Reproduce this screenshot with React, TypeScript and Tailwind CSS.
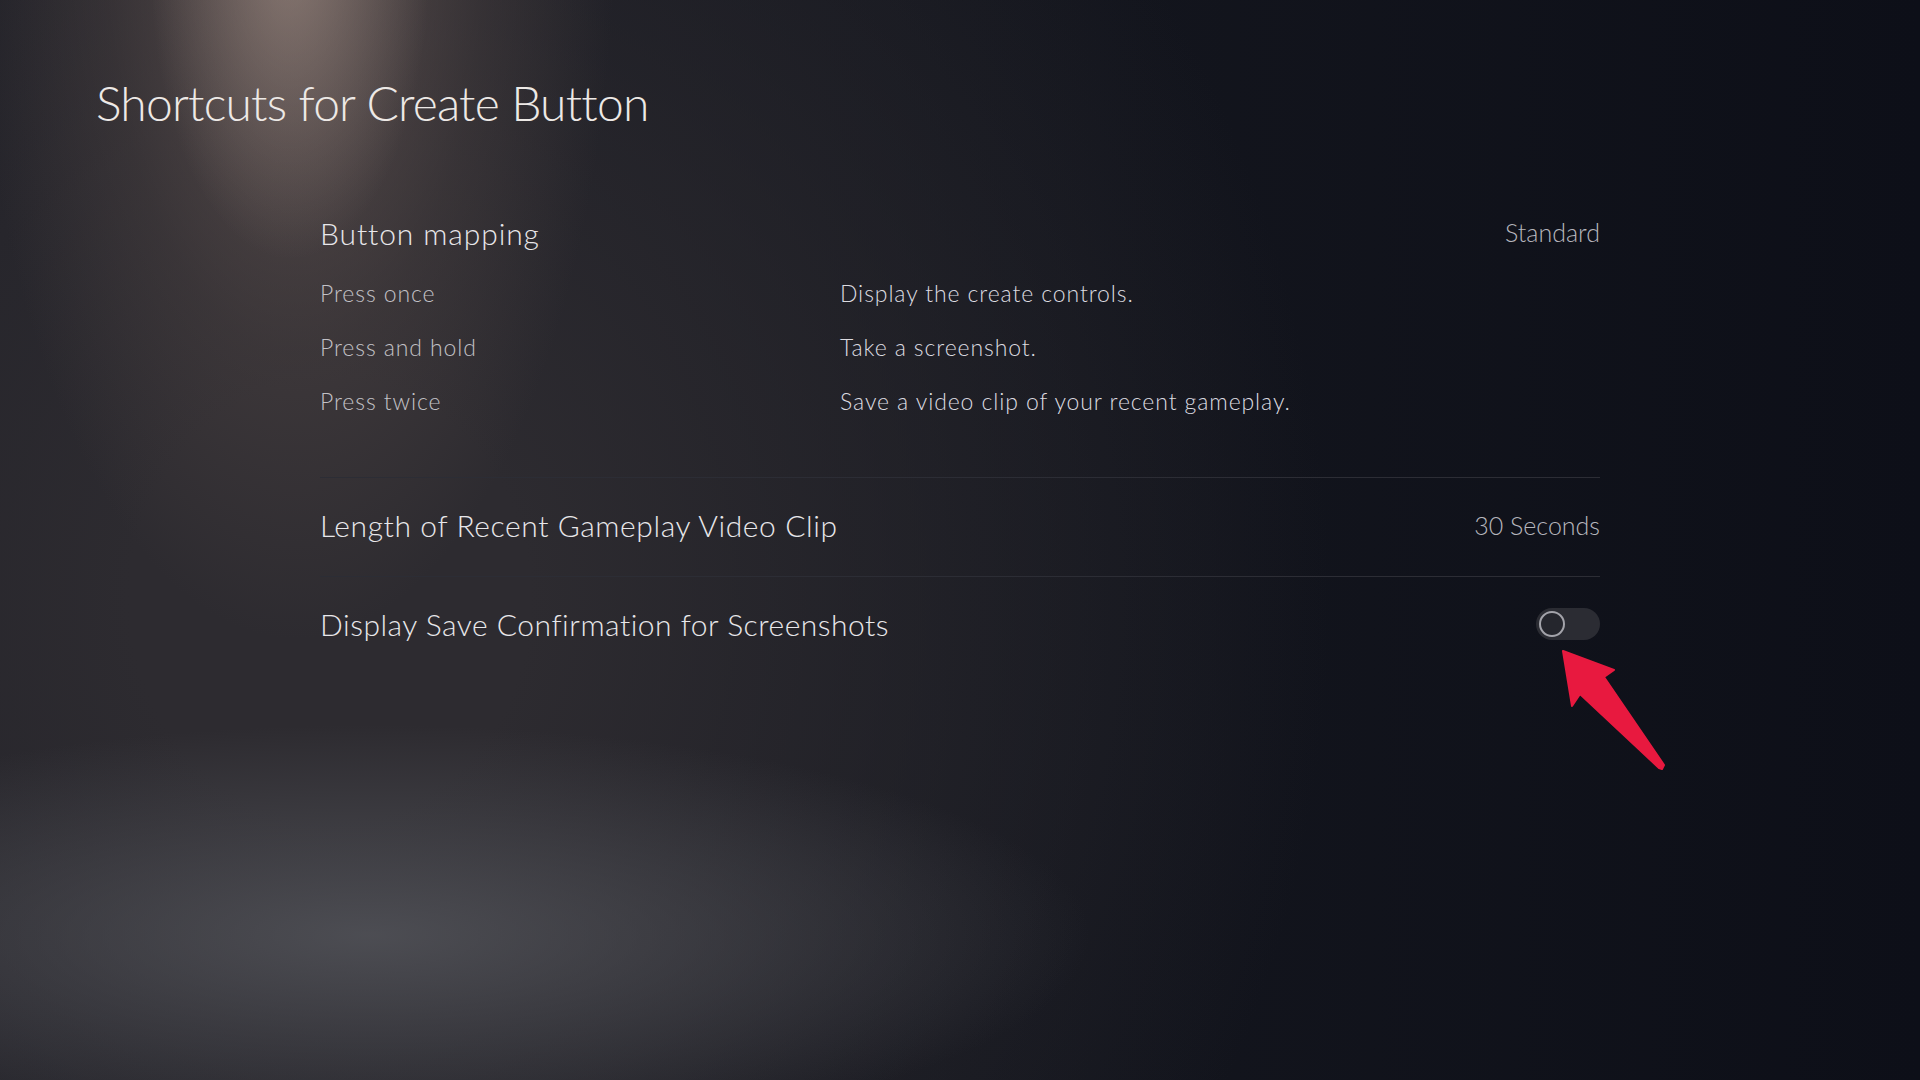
import React from "react";

const rows = [
  { label: "Press once", text: "Display the create controls." },
  { label: "Press and hold", text: "Take a screenshot." },
  { label: "Press twice", text: "Save a video clip of your recent gameplay." },
];

const Toggle = () => (
  <div className="flex h-[32px] w-[64px] items-center rounded-full bg-[#2b2c33] px-[3px]">
    <div className="h-[26px] w-[26px] rounded-full border-2 border-[#a3a3aa] bg-[#25262d]" />
  </div>
);

const Arrow = () => (
  <svg
    className="absolute left-[1555px] top-[645px]"
    width="115"
    height="130"
    viewBox="0 0 115 130"
  >
    <polygon
      points="8,6 59,25 49,32 109,120 107,124 104,123 25,49 17,61"
      fill="#e8193f"
      stroke="#e8193f"
      strokeWidth="2"
      strokeLinejoin="round"
    />
  </svg>
);

export default function App() {
  return (
    <div className="relative h-[1080px] w-[1920px] overflow-hidden bg-[#10121a] bg-[radial-gradient(ellipse_140px_300px_at_290px_-40px,rgba(175,155,145,0.5),transparent_100%),radial-gradient(ellipse_320px_720px_at_295px_-80px,rgba(125,106,100,0.65),rgba(95,82,79,0.3)_60%,transparent_100%),radial-gradient(ellipse_720px_210px_at_370px_935px,rgba(85,86,92,0.8),transparent_100%),radial-gradient(ellipse_1000px_1100px_at_330px_600px,#2d2b30_20%,transparent_100%),linear-gradient(90deg,#1b1c24,#14161e_50%,#0d0f18)] font-['Lato','Open_Sans',sans-serif] font-light">
      <h1 className="pl-[96px] pt-[79px] text-[48px] leading-none tracking-[-0.8px] text-[#ede9e6]">
        Shortcuts for Create Button
      </h1>

      <div className="ml-[320px] mt-[91px] w-[1280px]">
        <div className="flex items-baseline justify-between">
          <span className="text-[30px] leading-none tracking-[0.9px] text-[#e8e7ea]">Button mapping</span>
          <span className="relative -top-[3px] text-[25px] leading-none text-[#b6b6bd]">Standard</span>
        </div>

        <div className="mt-[34px] flex flex-col gap-[31px]">
          {rows.map((row) => (
            <div key={row.label} className="grid grid-cols-[520px_1fr] text-[23px] leading-none tracking-[0.9px]">
              <span className="text-[#c2c1c6]">{row.label}</span>
              <span className="text-[#dcdbe0]">{row.text}</span>
            </div>
          ))}
        </div>

        <div className="mt-[64px] h-px bg-[#2c2d35]" />

        <div className="flex items-baseline justify-between pb-[36px] pt-[32px]">
          <span className="text-[30px] leading-none tracking-[0.6px] text-[#e8e7ea]">
            Length of Recent Gameplay Video Clip
          </span>
          <span className="relative -top-[2px] text-[25px] leading-none text-[#b6b6bd]">30 Seconds</span>
        </div>

        <div className="h-px bg-[#2c2d35]" />

        <div className="flex items-center justify-between pt-[31px]">
          <span className="text-[30px] leading-none tracking-[0.5px] text-[#e8e7ea]">
            Display Save Confirmation for Screenshots
          </span>
          <Toggle />
        </div>
      </div>

      <Arrow />
    </div>
  );
}
